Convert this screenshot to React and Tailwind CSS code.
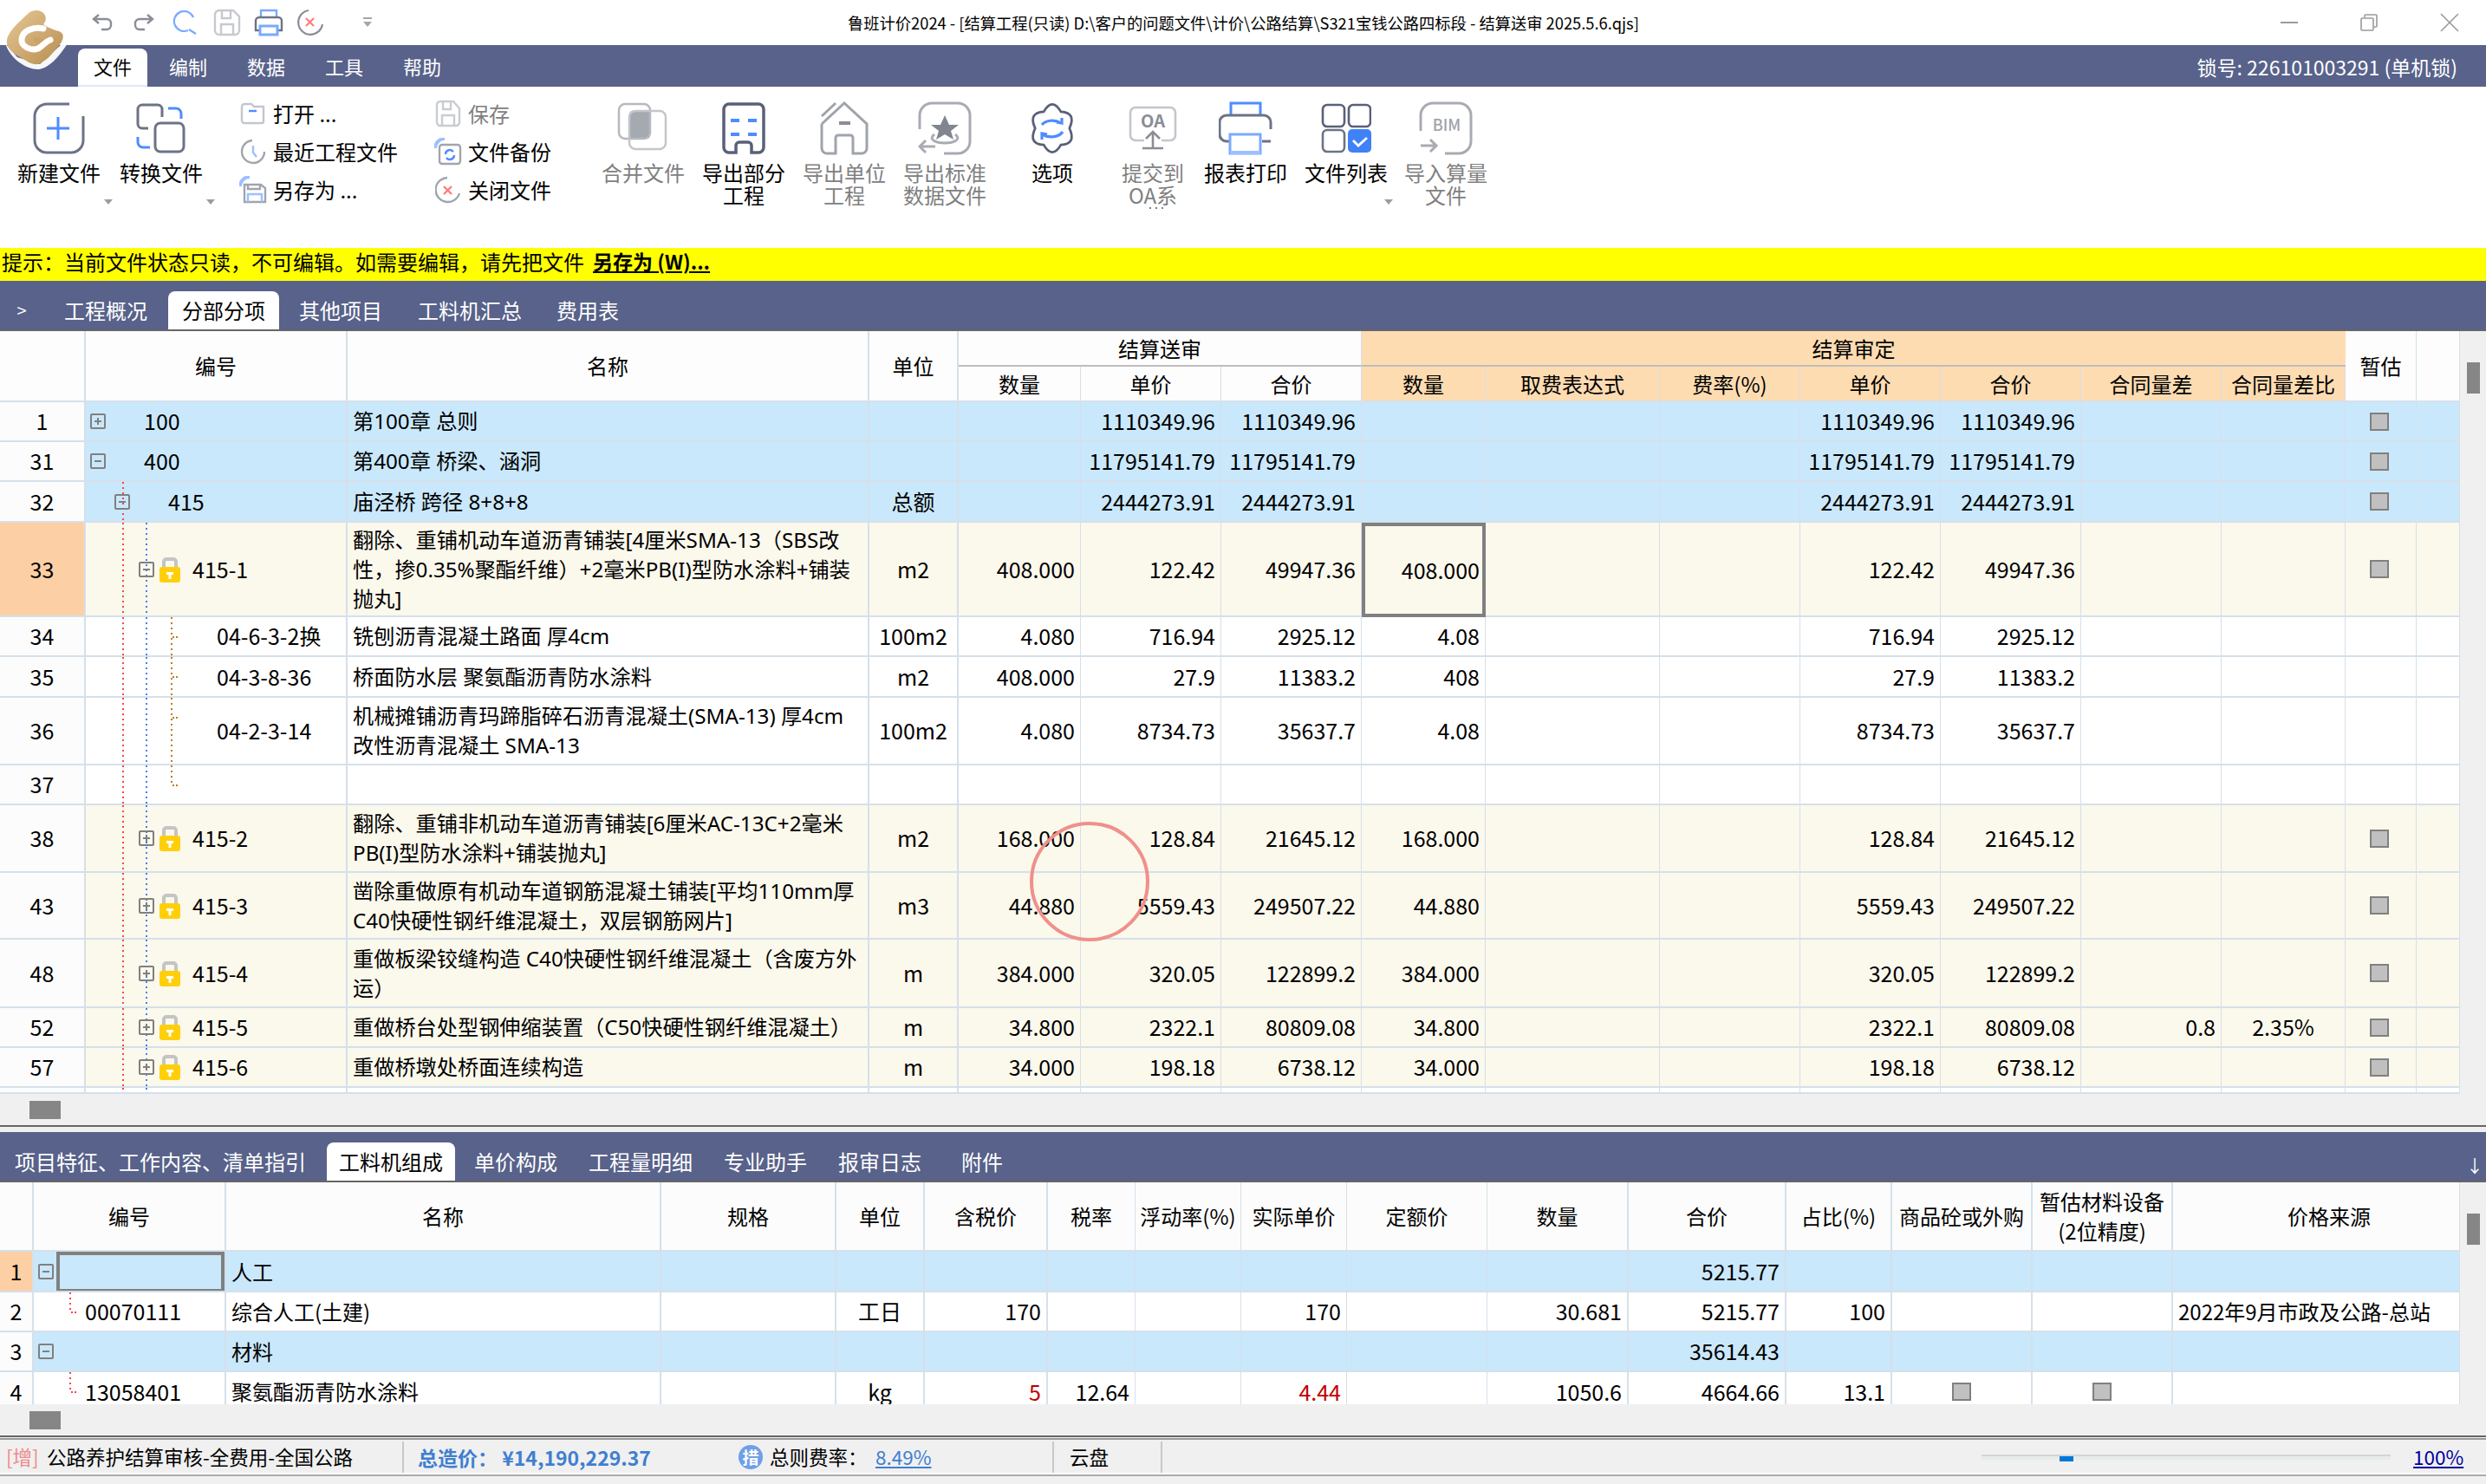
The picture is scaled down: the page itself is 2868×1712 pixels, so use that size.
import React from "react";

const TOP_COLS =
  "grid-cols-[99px_302px_602px_103px_141px_162px_162px_143px_201px_162px_162px_162px_162px_143px_82px_50px]";
const BOTTOM_COLS =
  "grid-cols-[39px_222px_502px_202px_102px_142px_101px_122px_122px_162px_163px_182px_122px_162px_162px_331px]";

const RED_DOTS =
  "bg-[repeating-linear-gradient(to_bottom,#f5474b_0,#f5474b_2px,transparent_2px,transparent_6px)]";
const BLUE_DOTS =
  "bg-[repeating-linear-gradient(to_bottom,#4a7ff0_0,#4a7ff0_2px,transparent_2px,transparent_6px)]";
const BROWN_DOTS =
  "bg-[repeating-linear-gradient(to_bottom,#b8801e_0,#b8801e_2px,transparent_2px,transparent_6px)]";
const BROWN_DASH =
  "bg-[repeating-linear-gradient(to_right,#b8801e_0,#b8801e_2px,transparent_2px,transparent_4px)]";
const RED_DASH =
  "bg-[repeating-linear-gradient(to_right,#f5474b_0,#f5474b_2px,transparent_2px,transparent_4px)]";

const topRows = [
  { n: "1", h: "h-[46px]", tone: "blue", level: 0, box: "+", code: "100", name: "第100章 总则", p: "1110349.96", t: "1110349.96", ap: "1110349.96", at: "1110349.96", est: true },
  { n: "31", h: "h-[46px]", tone: "blue", level: 0, box: "-", code: "400", name: "第400章 桥梁、涵洞", p: "11795141.79", t: "11795141.79", ap: "11795141.79", at: "11795141.79", est: true },
  { n: "32", h: "h-[47px]", tone: "blue", level: 1, box: "-", code: "415", name: "庙泾桥 跨径 8+8+8", unit: "总额", p: "2444273.91", t: "2444273.91", ap: "2444273.91", at: "2444273.91", est: true, red: true },
  { n: "33", h: "h-[109px]", tone: "cream", level: 2, box: "-", lock: true, code: "415-1", name: "翻除、重铺机动车道沥青铺装[4厘米SMA-13（SBS改\n性，掺0.35%聚酯纤维）+2毫米PB(I)型防水涂料+铺装\n抛丸]", unit: "m2", q: "408.000", p: "122.42", t: "49947.36", aq: "408.000", ap: "122.42", at: "49947.36", est: true, red: true, blue: true, active: true },
  { n: "34", h: "h-[46px]", tone: "white", level: 3, code: "04-6-3-2换", name: "铣刨沥青混凝土路面 厚4cm", unit: "100m2", q: "4.080", p: "716.94", t: "2925.12", aq: "4.08", ap: "716.94", at: "2925.12", red: true, blue: true, brown: true },
  { n: "35", h: "h-[47px]", tone: "white", level: 3, code: "04-3-8-36", name: "桥面防水层 聚氨酯沥青防水涂料", unit: "m2", q: "408.000", p: "27.9", t: "11383.2", aq: "408", ap: "27.9", at: "11383.2", red: true, blue: true, brown: true },
  { n: "36", h: "h-[78px]", tone: "white", level: 3, code: "04-2-3-14", name: "机械摊铺沥青玛蹄脂碎石沥青混凝土(SMA-13) 厚4cm\n改性沥青混凝土 SMA-13", unit: "100m2", q: "4.080", p: "8734.73", t: "35637.7", aq: "4.08", ap: "8734.73", at: "35637.7", red: true, blue: true, brown: true },
  { n: "37", h: "h-[46px]", tone: "white", level: 3, code: "", name: "", red: true, blue: true, brownEnd: true },
  { n: "38", h: "h-[78px]", tone: "cream", level: 2, box: "+", lock: true, code: "415-2", name: "翻除、重铺非机动车道沥青铺装[6厘米AC-13C+2毫米\nPB(I)型防水涂料+铺装抛丸]", unit: "m2", q: "168.000", p: "128.84", t: "21645.12", aq: "168.000", ap: "128.84", at: "21645.12", est: true, red: true, blue: true },
  { n: "43", h: "h-[77px]", tone: "cream", level: 2, box: "+", lock: true, code: "415-3", name: "凿除重做原有机动车道钢筋混凝土铺装[平均110mm厚\nC40快硬性钢纤维混凝土，双层钢筋网片]", unit: "m3", q: "44.880", p: "5559.43", t: "249507.22", aq: "44.880", ap: "5559.43", at: "249507.22", est: true, red: true, blue: true },
  { n: "48", h: "h-[79px]", tone: "cream", level: 2, box: "+", lock: true, code: "415-4", name: "重做板梁铰缝构造 C40快硬性钢纤维混凝土（含废方外\n运）", unit: "m", q: "384.000", p: "320.05", t: "122899.2", aq: "384.000", ap: "320.05", at: "122899.2", est: true, red: true, blue: true },
  { n: "52", h: "h-[46px]", tone: "cream", level: 2, box: "+", lock: true, code: "415-5", name: "重做桥台处型钢伸缩装置（C50快硬性钢纤维混凝土）", unit: "m", q: "34.800", p: "2322.1", t: "80809.08", aq: "34.800", ap: "2322.1", at: "80809.08", diff: "0.8", diffp: "2.35%", est: true, red: true, blue: true },
  { n: "57", h: "h-[46px]", tone: "cream", level: 2, box: "+", lock: true, code: "415-6", name: "重做桥墩处桥面连续构造", unit: "m", q: "34.000", p: "198.18", t: "6738.12", aq: "34.000", ap: "198.18", at: "6738.12", est: true, red: true, blue: true },
  { n: "", h: "h-[7px]", tone: "white", level: 3, code: "", name: "", red: true, blue: true, tail: true },
];

const toneBg = { blue: "bg-[#cae8fb]", cream: "bg-[#fbf8ec]", white: "bg-white" };
const levelPad = ["pl-[5px]", "pl-[33px]", "pl-[61px]", "pl-[151px]"];
const NAME_FONT = "font-['Noto_Sans','Noto_Sans_CJK_SC',sans-serif]";

function Cell({ children, right, center, strong, className = "" }) {
  return (
    <div
      className={`flex items-center overflow-hidden whitespace-nowrap border-b-2 border-[#d5e0ea] ${
        strong ? "border-r-2" : "border-r"
      } ${right ? "justify-end pr-[6px]" : ""} ${center ? "justify-center" : ""} ${className}`}
    >
      {children}
    </div>
  );
}

function HeadCell({ children, className = "" }) {
  return (
    <div className={`flex items-center justify-center border-b-2 border-r border-[#d5e0ea] text-center leading-[40px] ${className}`}>
      {children}
    </div>
  );
}

function TreeBox({ kind }) {
  return (
    <span className="relative block h-[18px] w-[18px] shrink-0 rounded-[2px] border-2 border-[#808080]">
      <span className="absolute left-[3px] top-[6px] h-[2px] w-[8px] bg-[#808080]" />
      {kind === "+" && <span className="absolute left-[6px] top-[3px] h-[8px] w-[2px] bg-[#808080]" />}
    </span>
  );
}

function Lock() {
  return (
    <svg width="24" height="30" viewBox="0 0 24 30" className="shrink-0">
      <path d="M5 13V6a3 3 0 0 1 3-3h8a3 3 0 0 1 3 3v7" fill="none" stroke="#c4c4c4" strokeWidth="4" />
      <rect x="0" y="12" width="24" height="18" rx="3" fill="#ffcf0a" />
      <path d="M8 18h8v3h-2.5v5h-3v-5H8z" fill="#fff" />
    </svg>
  );
}

function EstBox() {
  return <span className="block h-[21px] w-[22px] border-2 border-[#808080] bg-[#c0c0c0]" />;
}

function TopRow({ r }) {
  const bg = toneBg[r.tone];
  return (
    <div className={`grid ${TOP_COLS} ${r.h} overflow-hidden`}>
      <Cell center strong className={r.active ? "bg-[#fdcfa5]" : "bg-[#fcfcfc]"}>{r.n}</Cell>
      <Cell strong className={`relative ${bg} ${levelPad[r.level]}`}>
        {r.red && <span className={`absolute bottom-0 left-[42px] top-0 w-[2px] ${RED_DOTS}`} />}
        {r.blue && <span className={`absolute bottom-0 left-[69px] top-0 w-[2px] ${BLUE_DOTS}`} />}
        {r.brown && <span className={`absolute bottom-0 left-[98px] top-0 w-[2px] ${BROWN_DOTS}`} />}
        {r.brownEnd && <span className={`absolute left-[98px] top-0 h-[24px] w-[2px] ${BROWN_DOTS}`} />}
        {(r.brown || r.brownEnd) && <span className={`absolute left-[100px] top-[22px] h-[2px] w-[8px] ${BROWN_DASH}`} />}
        {r.box && <TreeBox kind={r.box} />}
        {r.box && (
          <span className="relative flex w-[44px] shrink-0 pl-[6px]">{r.lock && <Lock />}</span>
        )}
        <span className="relative">{r.code}</span>
      </Cell>
      <Cell strong className={`${bg} ${NAME_FONT} pl-[6px] text-[24.2px] leading-[34px] whitespace-pre-line`}>{r.name}</Cell>
      <Cell center strong className={bg}>{r.unit}</Cell>
      <Cell right className={bg}>{r.q}</Cell>
      <Cell right className={bg}>{r.p}</Cell>
      <Cell right className={bg}>{r.t}</Cell>
      {r.active ? (
        <div className="flex items-center justify-end border-[4px] border-[#808080] bg-[#fbf8ec] pr-[3px]">{r.aq}</div>
      ) : (
        <Cell right className={bg}>{r.aq}</Cell>
      )}
      <Cell className={bg} />
      <Cell className={bg} />
      <Cell right className={bg}>{r.ap}</Cell>
      <Cell right className={bg}>{r.at}</Cell>
      <Cell right className={bg}>{r.diff}</Cell>
      <Cell center className={bg}>{r.diffp}</Cell>
      <Cell center className={`${bg} pr-[3px]`}>{r.est && <EstBox />}</Cell>
      <Cell className={bg} />
    </div>
  );
}

const bottomRows = [
  { n: "1", h: "h-[47px]", tone: "blue", box: true, name: "人工", total: "5215.77", active: true },
  { n: "2", h: "h-[46px]", tone: "white", code: "00070111", name: "综合人工(土建)", unit: "工日", taxP: "170", real: "170", qty: "30.681", total: "5215.77", pct: "100", source: "2022年9月市政及公路-总站" },
  { n: "3", h: "h-[46px]", tone: "blue", box: true, name: "材料", total: "35614.43" },
  { n: "4", h: "h-[37px]", tone: "white", last: true, code: "13058401", name: "聚氨酯沥青防水涂料", unit: "kg", taxP: "5", rate: "12.64", real: "4.44", qty: "1050.6", total: "4664.66", pct: "13.1", checks: true, alert: true },
];

function BottomRow({ r }) {
  // the last row is the one the panel edge cuts through, so it has no bottom line
  const bg = `${toneBg[r.tone]} ${r.last ? "!overflow-visible !border-b-0 pt-[7px] leading-[30px]" : ""}`;
  const priceColor = r.alert ? "text-[#c00000]" : "";
  const numBg = `${r.active ? "bg-[#fdcfa5]" : "bg-[#fcfcfc]"} ${r.last ? "!overflow-visible !border-b-0 pt-[7px] leading-[30px]" : ""}`;
  return (
    <div className={`grid ${BOTTOM_COLS} ${r.h}`}>
      <Cell center strong className={numBg}>{r.n}</Cell>
      <Cell strong className={`relative ${bg} pl-[5px]`}>
        {r.box && <TreeBox kind="-" />}
        {r.active && <span className="absolute bottom-[-2px] left-[26px] right-0 top-0 border-[4px] border-[#808080]" />}
        {r.code && <span className={`absolute left-[41px] top-0 h-[24px] w-[2px] ${RED_DOTS}`} />}
        {r.code && <span className={`absolute left-[43px] top-[22px] h-[2px] w-[8px] ${RED_DASH}`} />}
        {r.code && <span className="pl-[54px]">{r.code}</span>}
      </Cell>
      <Cell strong className={`${bg} pl-[6px] text-[24px]`}>{r.name}</Cell>
      <Cell strong className={bg} />
      <Cell center strong className={bg}>{r.unit}</Cell>
      <Cell right strong className={`${bg} ${priceColor}`}>{r.taxP}</Cell>
      <Cell right className={bg}>{r.rate}</Cell>
      <Cell right className={bg} />
      <Cell right className={`${bg} ${priceColor}`}>{r.real}</Cell>
      <Cell className={bg} />
      <Cell right strong className={bg}>{r.qty}</Cell>
      <Cell right strong className={bg}>{r.total}</Cell>
      <Cell right strong className={bg}>{r.pct}</Cell>
      <Cell center strong className={bg}>{r.checks && <EstBox />}</Cell>
      <Cell center strong className={bg}>{r.checks && <EstBox />}</Cell>
      <Cell className={`${bg} pl-[6px] text-[24px]`}>{r.source}</Cell>
    </div>
  );
}

function Logo() {
  return (
    <svg width="84" height="84" viewBox="0 0 84 84" className="absolute left-0 top-0">
      <defs>
        <linearGradient id="gold" x1="0" y1="0" x2="1" y2="1">
          <stop offset="0" stopColor="#e6c896" />
          <stop offset="1" stopColor="#b88d50" />
        </linearGradient>
      </defs>
      <path d="M6 50C12 68 30 80 44 80C56 79 68 66 78 50L70 52L46 74L20 66Z" fill="#fff" opacity="0.95" />
      <path d="M42 12C52 12 56 22 50 28C52 30 60 34 68 36C74 38 74 44 70 50C62 60 56 68 48 72C42 76 36 74 30 70C20 64 10 60 8 50C6 38 24 24 32 16C35 13 38 12 42 12Z" fill="url(#gold)" />
      <path d="M50 33C38 30 26 36 25 45C24 54 36 59 44 56C50 53 52 48 58 46" fill="none" stroke="#fff" strokeWidth="7" strokeLinecap="round" />
      <path d="M38 44C44 42 48 44 50 46C46 50 40 50 38 44Z" fill="#c9a265" />
    </svg>
  );
}

function Qat() {
  return (
    <div className="flex items-center pl-[105px]">
      <svg width="26" height="24" viewBox="0 0 26 24" fill="none" stroke="#8a8d96" strokeWidth="2.4">
        <path d="M9 3L3 8l6 5M3 8h15a5 5 0 0 1 5 5v2a5 5 0 0 1-5 5h-6" />
      </svg>
      <svg width="26" height="24" viewBox="0 0 26 24" fill="none" stroke="#8a8d96" strokeWidth="2.4" className="ml-[22px]">
        <path d="M17 3l6 5-6 5M23 8H8a5 5 0 0 0-5 5v2a5 5 0 0 0 5 5h6" />
      </svg>
      <svg width="30" height="28" viewBox="0 0 30 28" fill="none" strokeWidth="2.2" className="ml-[20px]">
        <path d="M24 8A11.5 11.5 0 1 0 18 23" stroke="#7aa9ff" />
        <path d="M19 22l8 5" stroke="#7aa9ff" />
      </svg>
      <svg width="32" height="32" viewBox="0 0 32 32" fill="none" stroke="#c6c9cf" strokeWidth="2.4" className="ml-[17px]">
        <path d="M10 2H7a5 5 0 0 0-5 5v18a5 5 0 0 0 5 5h18a5 5 0 0 0 5-5V9l-7-7H10v9h10V3M9 30V18h14v12" />
      </svg>
      <svg width="34" height="32" viewBox="0 0 34 32" fill="none" strokeWidth="2.4" className="ml-[15px]">
        <path d="M8 10V2h18v8" stroke="#7aa9ff" />
        <path d="M7 25H2V14a4 4 0 0 1 4-4h22a4 4 0 0 1 4 4v11h-5" stroke="#6d7385" />
        <rect x="7" y="20" width="20" height="10" fill="#fff" stroke="#7aa9ff" strokeWidth="3" />
      </svg>
      <svg width="32" height="32" viewBox="0 0 32 32" fill="none" strokeWidth="2.2" className="ml-[15px]">
        <path d="M14 2A14 14 0 1 0 30 18" stroke="#8a8d96" />
        <path d="M11 11l9 9M20 11l-9 9" stroke="#ff7b7b" />
      </svg>
      <svg width="12" height="12" viewBox="0 0 12 12" className="ml-[44px]">
        <rect x="1" y="0" width="10" height="2" fill="#a3a6ad" />
        <path d="M1 5h10l-5 6z" fill="#a3a6ad" />
      </svg>
    </div>
  );
}

const stroke = { dark: "#6d7385", mid: "#a1a5ad", light: "#c3c6cc", blue: "#4e8cff" };

// six lobed outline of the options icon
const gearPath = (() => {
  const pt = (deg, r) => {
    const a = (deg * Math.PI) / 180;
    return `${(28 + r * Math.cos(a) * 0.9).toFixed(1)} ${(29 + r * Math.sin(a)).toFixed(1)}`;
  };
  let d = `M${pt(-120, 22)}`;
  for (let i = 0; i < 6; i++) {
    const lobe = -90 + i * 60;
    d += `Q${pt(lobe, 36)} ${pt(lobe + 30, 22)}`;
  }
  return d + "Z";
})();

const icons = {
  add: (
    <svg width="60" height="60" viewBox="0 0 60 60" fill="none" strokeWidth="3">
      <path d="M42 2H16A14 14 0 0 0 2 16V44A14 14 0 0 0 16 58H44A14 14 0 0 0 58 44V16" stroke={stroke.dark} />
      <path d="M16 30H42M29 17V43" stroke={stroke.blue} />
    </svg>
  ),
  convert: (
    <svg width="60" height="60" viewBox="0 0 60 60" fill="none" strokeWidth="3">
      <path d="M31 17V8a5 5 0 0 0-5-5H8a5 5 0 0 0-5 5V25a5 5 0 0 0 5 5H15" stroke={stroke.dark} />
      <rect x="23" y="24" width="33" height="33" rx="6" stroke={stroke.dark} />
      <path d="M38 7H47a6 6 0 0 1 6 6V19M3 40V46a6 6 0 0 0 6 6H17" stroke={stroke.blue} />
    </svg>
  ),
  merge: (
    <svg width="60" height="60" viewBox="0 0 60 60" fill="none" strokeWidth="2.5">
      <rect x="14" y="10" width="24" height="32" rx="4" fill="#a5a9b0" stroke="none" />
      <rect x="2" y="2" width="36" height="40" rx="7" stroke="#b6b9c0" />
      <rect x="14" y="10" width="42" height="44" rx="7" stroke="#c3c6cc" />
    </svg>
  ),
  building: (
    <svg width="50" height="60" viewBox="0 0 50 60" fill="none" strokeWidth="3.5">
      <path d="M16 58H8a6 6 0 0 1-6-6V8a6 6 0 0 1 6-6h34a6 6 0 0 1 6 6v44a6 6 0 0 1-6 6H34V50a4 4 0 0 0-4-4H20a4 4 0 0 0-4 4z" stroke="#5a6079" />
      <path d="M10 21h10M30 21h10M10 37h10M30 37h10" stroke={stroke.blue} strokeWidth="4" />
    </svg>
  ),
  house: (
    <svg width="56" height="62" viewBox="0 0 56 62" fill="none" strokeWidth="3">
      <path d="M2 17L18 2M2 26L28 2L54 26V54a6 6 0 0 1-6 6H38V42a3 3 0 0 0-3-3H21a3 3 0 0 0-3 3V60H8a6 6 0 0 1-6-6V26" stroke="#9fa3ab" />
      <path d="M22 25h13" stroke="#8a8d96" strokeWidth="4" />
    </svg>
  ),
  star: (
    <svg width="62" height="62" viewBox="0 0 62 62" fill="none" strokeWidth="3">
      <path d="M2 32V16A14 14 0 0 1 16 2H46A14 14 0 0 1 60 16V46A14 14 0 0 1 46 60H30" stroke="#a8abb3" />
      <path d="M31 16l5 11h11l-9 7 3 10-10-6-10 6 3-10-9-7h11z" fill="#80858f" stroke="none" />
      <path d="M19 38c-8 6 2 10 12 10s20-4 12-10" stroke="#a8abb3" />
      <path d="M20 52H2M9 45l-7 7 7 7" stroke="#a8abb3" />
    </svg>
  ),
  gear: (
    <svg width="56" height="58" viewBox="0 0 56 58" fill="none" strokeWidth="2.8">
      <path d={gearPath} stroke="#5a6079" />
      <path d="M16 25c4-5 14-7 22-2M33 22l6 1v-6M40 33c-4 6-15 8-24 3M22 36l-6-1v7" stroke={stroke.blue} strokeWidth="3.2" />
    </svg>
  ),
  oa: (
    <svg width="56" height="52" viewBox="0 0 56 52" fill="none" strokeWidth="2.6">
      <path d="M18 40H8a6 6 0 0 1-6-6V8a6 6 0 0 1 6-6h40a6 6 0 0 1 6 6v26a6 6 0 0 1-6 6H38" stroke="#c3c6cc" />
      <text x="28" y="25" textAnchor="middle" fontSize="20" fontWeight="700" fill="#8a8d96" stroke="none">OA</text>
      <path d="M28 48V31M20 38l8-8 8 8M16 49h24" stroke="#8a8d96" />
    </svg>
  ),
  print: (
    <svg width="62" height="62" viewBox="0 0 62 62" fill="none" strokeWidth="3">
      <path d="M14 16V2H48V16" stroke="#4e8cff" />
      <path d="M12 46H9a8 8 0 0 1-8-8V24a8 8 0 0 1 8-8H52a8 8 0 0 1 8 8V32M50 46H60" stroke="#6d7385" />
      <rect x="13" y="38" width="35" height="22" fill="#fff" stroke="#7aa9ff" />
      <path d="M13 59H48" stroke="#9dc0ff" strokeWidth="4" />
    </svg>
  ),
  list: (
    <svg width="58" height="58" viewBox="0 0 58 58" fill="none" strokeWidth="2.6">
      <rect x="2" y="2" width="25" height="25" rx="5" stroke="#5a6079" />
      <rect x="32" y="2" width="25" height="25" rx="5" stroke="#5a6079" />
      <rect x="2" y="31" width="25" height="25" rx="5" stroke="#6d7385" />
      <rect x="31" y="30" width="27" height="27" rx="5" fill="#3f81f7" stroke="none" />
      <path d="M37 43l6 6 10-9" stroke="#fff" strokeWidth="2.8" />
    </svg>
  ),
  bim: (
    <svg width="62" height="62" viewBox="0 0 62 62" fill="none" strokeWidth="3">
      <path d="M2 34V16A14 14 0 0 1 16 2H46A14 14 0 0 1 60 16V46A14 14 0 0 1 46 60H30" stroke="#a8abb3" />
      <text x="32" y="34" textAnchor="middle" fontSize="18" fontWeight="500" fill="#a0a3ab" stroke="none">BIM</text>
      <path d="M2 51H20M13 44l7 7-7 7" stroke="#a8abb3" />
    </svg>
  ),
};

const smallIcons = {
  open: (
    <svg width="30" height="26" viewBox="0 0 30 26" fill="none" strokeWidth="2.4">
      <path d="M2 5a3 3 0 0 1 3-3h8l3 3h11v17a2 2 0 0 1-2 2H5a3 3 0 0 1-3-3z" stroke={stroke.light} />
      <path d="M10 10h9" stroke={stroke.blue} />
    </svg>
  ),
  recent: (
    <svg width="30" height="30" viewBox="0 0 30 30" fill="none" strokeWidth="2.4">
      <path d="M14 2A13 13 0 1 0 28 15" stroke={stroke.mid} />
      <path d="M15 8v8l4 5" stroke="#9dc0ff" />
    </svg>
  ),
  saveAs: (
    <svg width="32" height="32" viewBox="0 0 32 32" fill="none" strokeWidth="2.4">
      <path d="M1 12A11 11 0 0 1 12 1" stroke="#9dc0ff" strokeWidth="4" />
      <path d="M6 10h19l5 4v16H6z" stroke={stroke.mid} />
      <path d="M10 30v-9h16v9" stroke="#9dc0ff" />
      <path d="M10 10v5h14v-5" stroke={stroke.mid} />
    </svg>
  ),
  save: (
    <svg width="30" height="32" viewBox="0 0 30 32" fill="none" stroke="#c9ccd1" strokeWidth="2.4">
      <path d="M9 2H6a4 4 0 0 0-4 4v20a4 4 0 0 0 4 4h18a4 4 0 0 0 4-4V10l-7-8H9v9h9V3M8 30V18h14v12" />
    </svg>
  ),
  backup: (
    <svg width="32" height="32" viewBox="0 0 32 32" fill="none" strokeWidth="2.4">
      <path d="M1 12A11 11 0 0 1 12 1" stroke="#9dc0ff" strokeWidth="4" />
      <rect x="6" y="8" width="24" height="22" rx="3" stroke={stroke.mid} />
      <path d="M13 19a5 5 0 0 1 9-3M23 20a5 5 0 0 1-9 3" stroke={stroke.blue} />
    </svg>
  ),
  close: (
    <svg width="30" height="32" viewBox="0 0 30 32" fill="none" strokeWidth="2.4">
      <path d="M14 2A14 14 0 1 0 28 20" stroke={stroke.mid} />
      <path d="M10 12l9 9M19 12l-9 9" stroke="#ff7b7b" />
    </svg>
  ),
};

function Chevron({ className = "" }) {
  return (
    <svg width="10" height="6" viewBox="0 0 10 6" className={`absolute ${className}`}>
      <path d="M0 0h10L5 6z" fill="#9a9da4" />
    </svg>
  );
}

function RibbonBtn({ icon, label, width, muted, arrow }) {
  return (
    <div className={`relative flex flex-col items-center ${width}`}>
      <div className="flex h-[62px] items-center">{icons[icon]}</div>
      <div className={`mt-[7px] whitespace-pre-line text-center leading-[26px] ${muted ? "text-[#808080]" : "text-black"}`}>
        {label}
      </div>
      {arrow}
    </div>
  );
}

function SmallBtn({ icon, label, muted }) {
  return (
    <div className={`flex h-[44px] items-center gap-[7px] ${muted ? "text-[#808080]" : "text-black"}`}>
      <span className="flex w-[32px] justify-center">{smallIcons[icon]}</span>
      <span>{label}</span>
    </div>
  );
}

function Ribbon() {
  return (
    <div className="flex h-[186px] bg-white pl-[9px] pt-[17px] text-[24px]">
      <RibbonBtn icon="add" label="新建文件" width="w-[118px]" arrow={<Chevron className="left-[111px] top-[113px]" />} />
      <RibbonBtn icon="convert" label="转换文件" width="w-[118px]" arrow={<Chevron className="left-[111px] top-[113px]" />} />
      <div className="-mt-[8px] ml-[31px] flex w-[225px] flex-col">
        <SmallBtn icon="open" label="打开 ..." />
        <SmallBtn icon="recent" label="最近工程文件" />
        <SmallBtn icon="saveAs" label="另存为 ..." />
      </div>
      <div className="-mt-[8px] flex w-[183px] flex-col">
        <SmallBtn icon="save" label="保存" muted />
        <SmallBtn icon="backup" label="文件备份" />
        <SmallBtn icon="close" label="关闭文件" />
      </div>
      <RibbonBtn icon="merge" label="合并文件" width="w-[116px]" muted />
      <RibbonBtn icon="building" label={"导出部分\n工程"} width="w-[116px]" />
      <RibbonBtn icon="house" label={"导出单位\n工程"} width="w-[116px]" muted />
      <RibbonBtn icon="star" label={"导出标准\n数据文件"} width="w-[116px]" muted />
      <div className="w-[8px]" />
      <RibbonBtn icon="gear" label="选项" width="w-[116px]" />
      <RibbonBtn
        icon="oa"
        label={"提交到\nOA系"}
        width="w-[116px]"
        muted
        arrow={
          <span className="absolute left-[54px] top-[122px] flex gap-[5px]">
            <i className="h-[2px] w-[2px] bg-[#808080]" />
            <i className="h-[2px] w-[2px] bg-[#808080]" />
            <i className="h-[2px] w-[2px] bg-[#808080]" />
          </span>
        }
      />
      <RibbonBtn icon="print" label="报表打印" width="w-[98px]" />
      <RibbonBtn icon="list" label="文件列表" width="w-[134px]" arrow={<Chevron className="left-[111px] top-[113px]" />} />
      <RibbonBtn icon="bim" label={"导入算量\n文件"} width="w-[96px]" muted />
    </div>
  );
}

function DarkTab({ children, active, className = "" }) {
  return (
    <div
      className={`flex h-[44px] items-center justify-center rounded-t-[8px] px-[16px] ${
        active ? "bg-white text-black" : "text-white"
      } ${className}`}
    >
      {children}
    </div>
  );
}

function HScroll() {
  return (
    <div className="flex h-[36px] items-center bg-[#f0f0f0] pl-[34px]">
      <div className="h-[21px] w-[36px] bg-[#868686]" />
    </div>
  );
}

export default function App() {
  return (
    <div className="relative flex h-[1712px] w-full flex-col overflow-hidden bg-[#f0f0f0] font-['Noto_Sans_CJK_SC',sans-serif] text-[25px] text-black">
      {/* title bar */}
      <div className="relative flex h-[52px] items-center bg-white">
        <Qat />
        <div className="absolute left-[978px] top-[12px] whitespace-nowrap text-[18.3px] leading-[28px]">
          鲁班计价2024 - [结算工程(只读) D:\客户的问题文件\计价\公路结算\S321宝钱公路四标段 - 结算送审 2025.5.6.qjs]
        </div>
        <div className="ml-auto flex items-center gap-[72px] pr-[31px]">
          <span className="h-[2px] w-[20px] bg-[#9a9a9a]" />
          <svg width="20" height="20" viewBox="0 0 20 20" fill="none" stroke="#9a9a9a" strokeWidth="1.6">
            <path d="M5 4V2a1 1 0 0 1 1-1h12a1 1 0 0 1 1 1v12a1 1 0 0 1-1 1h-2" />
            <rect x="1" y="5" width="14" height="14" rx="1" />
          </svg>
          <svg width="22" height="22" viewBox="0 0 22 22" stroke="#9a9a9a" strokeWidth="1.6">
            <path d="M1 1l20 20M21 1L1 21" />
          </svg>
        </div>
      </div>

      {/* menu bar */}
      <div className="flex h-[48px] items-end bg-[#58628a] pl-[90px] text-[22px]">
        <div className="flex h-[44px] w-[80px] items-center justify-center rounded-t-[8px] border-b-2 border-[#dfe8f5] bg-white pb-[2px] text-black">文件</div>
        <div className="ml-[9px] flex h-[44px] items-center gap-[46px] pb-[3px] pl-[16px] text-white">
          <span>编制</span>
          <span>数据</span>
          <span>工具</span>
          <span>帮助</span>
        </div>
        <div className="ml-auto flex h-[44px] items-center pb-[2px] pr-[33px] text-[23px] text-white">锁号: 226101003291 (单机锁)</div>
      </div>

      <Ribbon />

      {/* readonly notice */}
      <div className="flex h-[38px] items-center whitespace-nowrap bg-[#ffff00] pb-[7px] pl-[2px] text-[24px]">
        提示：当前文件状态只读，不可编辑。如需要编辑，请先把文件
        <span className="ml-[10px] text-[23px] font-bold underline">另存为 (W)...</span>
      </div>

      {/* sheet tabs */}
      <div className="flex h-[58px] items-end border-b-2 border-[#666] bg-[#58628a] pl-[16px] text-[24px]">
        <DarkTab className="w-[18px] !px-0 text-[20px]">&gt;</DarkTab>
        <DarkTab className="ml-[24px]">工程概况</DarkTab>
        <DarkTab active className="ml-[8px]">分部分项</DarkTab>
        <DarkTab className="ml-[7px]">其他项目</DarkTab>
        <DarkTab className="ml-[9px]">工料机汇总</DarkTab>
        <DarkTab className="ml-[8px]">费用表</DarkTab>
      </div>

      {/* main table */}
      <div className="flex h-[880px]">
        <div className="w-[2838px]">
          <div className={`grid ${TOP_COLS} grid-rows-[41px_41px] bg-[#fdfdfd] text-[24px]`}>
            <HeadCell className="row-span-2 border-r-2" />
            <HeadCell className="row-span-2 border-r-2">编号</HeadCell>
            <HeadCell className="row-span-2 border-r-2">名称</HeadCell>
            <HeadCell className="row-span-2 border-r-2">单位</HeadCell>
            <div className="col-span-3 flex items-center justify-center border-b-2 border-r border-[#bdbdbd] border-r-[#d5e0ea]">结算送审</div>
            <div className="col-span-7 flex items-center justify-center border-b-2 border-[#bdbdbd] bg-[#fedcb2]">结算审定</div>
            <HeadCell className="row-span-2">暂估</HeadCell>
            <HeadCell className="row-span-2" />
            <HeadCell>数量</HeadCell>
            <HeadCell>单价</HeadCell>
            <HeadCell>合价</HeadCell>
            <HeadCell className="bg-[#fedcb2]">数量</HeadCell>
            <HeadCell className="bg-[#fedcb2]">取费表达式</HeadCell>
            <HeadCell className="bg-[#fedcb2]">费率(%)</HeadCell>
            <HeadCell className="bg-[#fedcb2]">单价</HeadCell>
            <HeadCell className="bg-[#fedcb2]">合价</HeadCell>
            <HeadCell className="bg-[#fedcb2]">合同量差</HeadCell>
            <HeadCell className="bg-[#fedcb2]">合同量差比</HeadCell>
          </div>
          {topRows.map((r, i) => (
            <TopRow key={i} r={r} />
          ))}
        </div>
        <div className="flex w-[30px] justify-center bg-[#f0f0f0] pt-[36px]">
          <div className="h-[36px] w-[15px] bg-[#868686]" />
        </div>
      </div>
      <HScroll />
      <div className="h-[2px] bg-[#666]" />
      <div className="h-[6px]" />

      {/* bottom tabs */}
      <div className="flex h-[58px] items-end border-b-2 border-[#666] bg-[#58628a] pl-[1px] text-[24px]">
        <DarkTab>项目特征、工作内容、清单指引</DarkTab>
        <DarkTab active className="ml-[8px] !px-[14px]">工料机组成</DarkTab>
        <DarkTab className="ml-[6px]">单价构成</DarkTab>
        <DarkTab className="ml-[4px]">工程量明细</DarkTab>
        <DarkTab className="ml-[4px]">专业助手</DarkTab>
        <DarkTab className="ml-[4px]">报审日志</DarkTab>
        <DarkTab className="ml-[14px]">附件</DarkTab>
        <span className="ml-auto pb-[2px] pr-[3px] text-[20px] text-white">↓</span>
      </div>

      {/* resource table */}
      <div className="flex h-[256px]">
        <div className="h-[256px] w-[2838px]">
          <div className={`grid ${BOTTOM_COLS} h-[80px] bg-[#fcfcfc] text-[24px] leading-[34px]`}>
            <HeadCell className="border-r-2" />
            <HeadCell className="border-r-2">编号</HeadCell>
            <HeadCell className="border-r-2">名称</HeadCell>
            <HeadCell className="border-r-2">规格</HeadCell>
            <HeadCell className="border-r-2">单位</HeadCell>
            <HeadCell className="border-r-2">含税价</HeadCell>
            <HeadCell>税率</HeadCell>
            <HeadCell>浮动率(%)</HeadCell>
            <HeadCell>实际单价</HeadCell>
            <HeadCell>定额价</HeadCell>
            <HeadCell className="border-r-2">数量</HeadCell>
            <HeadCell className="border-r-2">合价</HeadCell>
            <HeadCell className="border-r-2">占比(%)</HeadCell>
            <HeadCell className="border-r-2 whitespace-nowrap">商品砼或外购</HeadCell>
            <HeadCell className="border-r-2 whitespace-pre-line !leading-[34px]">{"暂估材料设备\n(2位精度)"}</HeadCell>
            <HeadCell className="pl-[30px]">价格来源</HeadCell>
          </div>
          {bottomRows.map((r, i) => (
            <BottomRow key={i} r={r} />
          ))}
        </div>
        <div className="flex w-[30px] justify-center bg-[#f0f0f0] pt-[36px]">
          <div className="h-[36px] w-[15px] bg-[#868686]" />
        </div>
      </div>
      <HScroll />
      <div className="h-[2px] bg-[#666]" />
      <div className="mt-[1px] h-[2px] bg-[#999]" />

      {/* status bar */}
      <div className="flex h-[38px] items-center whitespace-nowrap bg-[#f0f0f0] pt-[2px] text-[22.5px]">
        <span className="ml-[7px] w-[47px] text-[#ee8a8a]">[增]</span>
        <span className="w-[410px]">公路养护结算审核-全费用-全国公路</span>
        <span className="h-[36px] w-[2px] bg-[#c8c8c8]" />
        <span className="ml-[16px] w-[370px] text-[23px] font-bold text-[#3f7fd0]">总造价： ¥14,190,229.37</span>
        <span className="flex h-[28px] w-[28px] items-center justify-center rounded-full bg-[#6f9fe8] text-[19px] font-bold text-white">措</span>
        <span className="ml-[8px] w-[122px]">总则费率：</span>
        <span className="w-[204px] text-[#3f7fd0] underline">8.49%</span>
        <span className="h-[36px] w-[2px] bg-[#c8c8c8]" />
        <span className="ml-[18px] w-[105px]">云盘</span>
        <span className="h-[36px] w-[2px] bg-[#c8c8c8]" />
        <span className="relative ml-[945px] h-[6px] w-[472px] border-t-2 border-[#d4d6d6] bg-[#e6ebea]">
          <span className="absolute left-[90px] top-[0px] h-[6px] w-[16px] bg-[#0078d7]" />
        </span>
        <span className="ml-[26px] text-[#0000a0] underline">100%</span>
      </div>
      <div className="h-[2px] bg-white" />
      <div className="h-[2px] bg-[#aaa]" />

      <Logo />

      {/* hand-drawn marker on top of the sheet */}
      <div className="absolute left-[1188px] top-[948px] h-[138px] w-[138px] rounded-full border-[4px] border-[#f0908a]" />
    </div>
  );
}
